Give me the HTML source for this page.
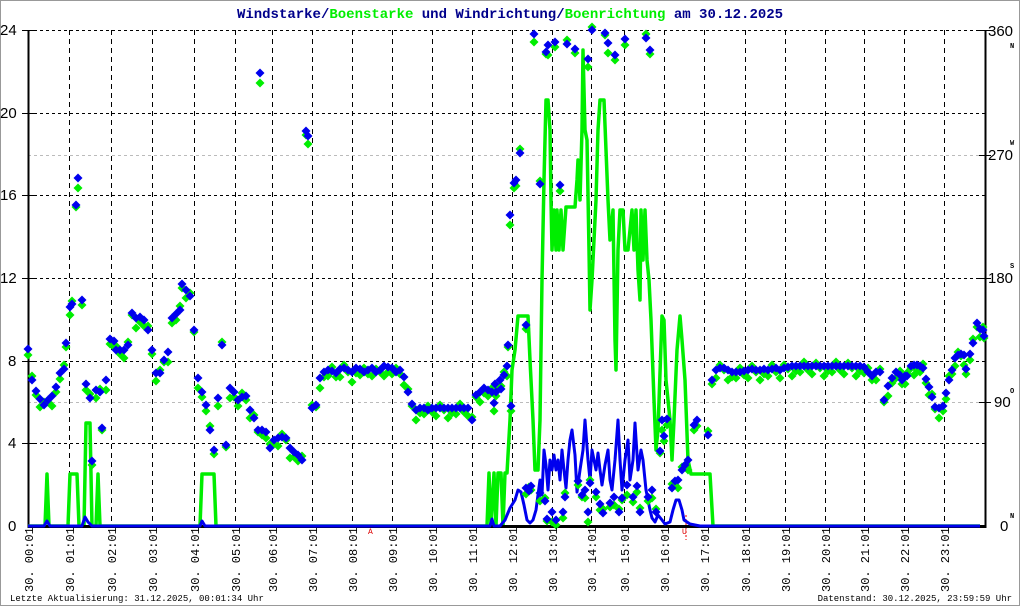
<!DOCTYPE html>
<html><head><meta charset="utf-8"><style>
html,body{margin:0;padding:0;background:#fff}
svg{display:block}
</style></head><body>
<svg id="s" width="1020" height="606" xmlns="http://www.w3.org/2000/svg">
<rect x="0.5" y="0.5" width="1019" height="605" fill="#fff" stroke="#999"/>
<text x="510" y="18" text-anchor="middle" font-family="Liberation Mono, monospace" font-weight="bold" font-size="14"><tspan fill="#00008b">Windstarke/</tspan><tspan fill="#00ee00">Boenstarke</tspan><tspan fill="#00008b"> und Windrichtung/</tspan><tspan fill="#00ee00">Boenrichtung</tspan><tspan fill="#00008b"> am 30.12.2025</tspan></text>
<g id="grid"></g>
<g id="lines"></g>
<g id="pts"></g>
<g font-family="Liberation Sans, sans-serif" font-size="15" fill="#000">
<text x="0" y="35">24</text><text x="0" y="118">20</text><text x="0" y="200">16</text><text x="0" y="283">12</text><text x="8" y="366">8</text><text x="8" y="448">4</text><text x="8" y="531">0</text>
<text x="988" y="36">360</text><text x="988" y="160">270</text><text x="988" y="283">180</text><text x="994" y="407">90</text><text x="1000" y="531">0</text>
</g>
<g font-family="Liberation Mono, monospace" font-weight="bold" font-size="7" fill="#000">
<text x="1010" y="48">N</text><text x="1010" y="145">W</text><text x="1010" y="268">S</text><text x="1010" y="393">O</text><text x="1010" y="518">N</text>
</g>
<text x="368" y="534" font-family="Liberation Mono, monospace" font-size="8" fill="#d00">A</text>
<text x="682" y="534" font-family="Liberation Mono, monospace" font-size="8" fill="#d00">U</text>
<g id="xl" font-family="Liberation Mono, monospace" font-size="12" fill="#000"></g>
<text x="10" y="601" font-family="Liberation Mono, monospace" font-size="9" fill="#000">Letzte Aktualisierung: 31.12.2025, 00:01:34 Uhr</text>
<text x="1012" y="601" text-anchor="end" font-family="Liberation Mono, monospace" font-size="9" fill="#000">Datenstand: 30.12.2025, 23:59:59 Uhr</text>
</svg>
<script>
var NS="http://www.w3.org/2000/svg";
function el(p,t,a,txt){var e=document.createElementNS(NS,t);for(var k in a)e.setAttribute(k,a[k]);if(txt)e.textContent=txt;document.getElementById(p).appendChild(e);return e;}
var R=985;
var gx=[28,69,111,152,194,235,272,312,352,392,432,472,512,552,591,624,664,704,745,785,825,864,904,944];
var hy=[30,113,195,278,361,443];
for(var i=0;i<hy.length;i++)el("grid","line",{x1:28,x2:R,y1:hy[i]+.5,y2:hy[i]+.5,stroke:"#000","stroke-dasharray":"3,3"});
el("grid","line",{x1:28,x2:R,y1:155.5,y2:155.5,stroke:"#bbb","stroke-dasharray":"3,3"});
el("grid","line",{x1:28,x2:R,y1:402.5,y2:402.5,stroke:"#bbb","stroke-dasharray":"3,3"});
for(var i=1;i<gx.length;i++)el("grid","line",{x1:gx[i]+.5,x2:gx[i]+.5,y1:30,y2:526,stroke:"#000","stroke-dasharray":"5,4"});
el("grid","line",{x1:28.5,x2:28.5,y1:30,y2:528,stroke:"#000","stroke-width":2});
el("grid","line",{x1:R+.5,x2:R+.5,y1:30,y2:528,stroke:"#000","stroke-width":2});
for(var i=0;i<hy.length;i++){el("grid","line",{x1:22,x2:34,y1:hy[i]+.5,y2:hy[i]+.5,stroke:"#000"});}
[30,155,278,402].forEach(function(y){el("grid","line",{x1:R-6,x2:R+6,y1:y+.5,y2:y+.5,stroke:"#000"});});
el("grid","line",{x1:686,x2:686,y1:515,y2:540,stroke:"#e00","stroke-dasharray":"2,2"});
for(var i=0;i<gx.length;i++){var h=("0"+i).slice(-2);el("xl","text",{transform:"translate("+(gx[i]+5)+",592) rotate(-90)"},"30. "+h+":01");}
var G="28,526 45,526 47,474 49,526 68,526 70,474 77,474 79,526 84,526 86,423 90,423 92,526 96,526 98,474 100,526 200,526 202,474 214,474 216,526 487,526 489,473 491,526 494,473 496,526 498,473 501,473 503,526 505,473 507,473 510,420 512,370 515,350 518,316 528,316 530,360 533,420 535,470 538,470 540,420 542,280 544,180 546,100 548,100 550,130 551,200 552,250 554,210 556,250 557,210 559,250 561,210 563,250 566,207 570,207 575,207 577,180 578,160 580,200 582,130 583,50 585,130 587,140 589,250 590,310 592,280 594,240 596,200 598,130 600,100 604,100 606,150 608,200 610,240 613,210 615,340 616,370 618,250 620,210 623,210 625,250 628,250 630,230 632,210 634,250 636,210 638,270 640,300 641,210 643,260 645,210 647,260 649,280 651,320 654,400 656,450 658,430 662,316 664,320 666,380 670,420 672,460 674,420 677,350 680,316 682,340 685,380 688,460 691,474 710,474 713,526 980,526";
var B="28,526 44,526 47,521 50,526 82,526 85,517 88,522 92,526 200,526 202,521 205,526 490,526 492,519 494,526 500,526 505,520 510,508 515,500 518,490 521,492 524,505 527,520 530,523 533,520 536,510 540,480 542,495 544,450 546,465 548,490 550,460 552,470 554,455 556,470 558,460 560,480 562,450 564,470 566,488 568,460 570,440 572,430 575,455 577,492 580,470 583,450 585,420 588,460 590,480 592,450 594,460 596,470 598,453 600,470 602,485 605,465 608,450 610,480 612,490 615,460 618,420 620,460 622,490 625,460 628,440 630,480 633,460 635,423 638,470 641,450 643,460 646,490 650,510 652,518 655,522 658,515 662,520 665,524 670,522 673,510 676,500 679,500 682,510 684,520 690,524 700,526 980,526";
el("lines","polyline",{points:G,fill:"none",stroke:"#00ee00","stroke-width":3.5,"stroke-linejoin":"round"});
el("lines","line",{x1:28,x2:R,y1:526.5,y2:526.5,stroke:"#000","stroke-width":3});
el("lines","polyline",{points:B,fill:"none",stroke:"#0000ee","stroke-width":3,"stroke-linejoin":"round"});
var P=[[28,349],[32,380],[36,391],[40,399],[44,405],[48,400],[52,396],[56,387],[60,373],[64,369],[66,343],[70,307],[72,304],[76,205],[78,178],[82,300],[86,384],[90,398],[92,461],[96,390],[100,392],[102,428],[106,380],[110,339],[114,341],[116,350],[120,350],[124,350],[128,345],[132,313],[136,318],[140,317],[144,320],[148,330],[152,350],[156,373],[160,373],[164,360],[168,352],[172,318],[176,314],[180,310],[182,284],[186,290],[190,296],[194,330],[198,378],[202,392],[206,405],[210,430],[214,450],[218,398],[222,345],[226,445],[230,388],[234,392],[238,400],[242,397],[246,396],[250,410],[254,418],[258,430],[260,73],[262,430],[266,432],[270,448],[274,440],[278,438],[282,437],[286,438],[290,448],[294,452],[298,455],[302,460],[306,131],[308,136],[312,408],[316,405],[320,378],[324,372],[328,370],[332,371],[336,373],[340,369],[344,368],[348,370],[352,372],[356,368],[360,369],[364,372],[368,370],[372,368],[376,372],[380,370],[384,366],[388,367],[392,368],[396,372],[400,370],[404,377],[408,392],[412,404],[416,410],[420,408],[424,408],[428,410],[432,408],[436,408],[440,408],[444,408],[448,408],[452,408],[456,408],[460,408],[464,408],[468,408],[472,420],[476,395],[480,392],[484,388],[488,390],[492,392],[496,392],[500,380],[504,375],[508,345],[510,215],[514,183],[516,180],[520,153],[526,325],[534,34],[540,184],[546,52],[548,45],[555,42],[560,185],[567,44],[575,49],[588,59],[592,30],[605,33],[608,43],[615,55],[625,39],[646,38],[650,50],[494,403],[501,389],[495,384],[507,366],[511,406],[526,488],[529,491],[531,486],[540,493],[545,501],[547,519],[552,512],[556,520],[563,512],[565,497],[578,481],[585,490],[590,483],[582,495],[588,512],[596,492],[600,504],[603,513],[610,503],[614,497],[619,512],[622,498],[627,485],[633,497],[637,486],[640,512],[648,497],[652,490],[656,512],[660,451],[662,420],[664,436],[667,419],[672,488],[675,481],[678,480],[682,470],[685,465],[688,460],[694,425],[697,420],[708,435],[712,380],[716,370],[720,368],[724,368],[728,370],[732,372],[736,372],[740,372],[744,371],[748,370],[752,369],[756,370],[760,370],[764,369],[768,370],[772,369],[776,368],[780,370],[784,368],[788,367],[792,366],[796,366],[800,366],[804,366],[808,366],[812,366],[816,366],[820,366],[824,366],[828,366],[832,366],[836,366],[840,366],[844,366],[848,366],[852,366],[856,366],[860,366],[864,367],[868,372],[872,376],[876,372],[880,372],[884,400],[888,386],[892,378],[896,372],[900,375],[902,380],[905,376],[907,376],[911,366],[914,365],[917,365],[920,366],[923,368],[926,379],[929,387],[932,397],[935,407],[939,408],[943,406],[946,393],[949,380],[952,370],[955,358],[958,355],[961,354],[964,355],[966,369],[970,354],[973,343],[977,323],[980,329],[983,330],[984,336]];
function dia(x,y,c){el("pts","polygon",{points:(x)+","+(y-4.5)+" "+(x+4.5)+","+y+" "+x+","+(y+4.5)+" "+(x-4.5)+","+y,fill:c});}
var off=[6,-4,4,8,-3,2,10,5];
P.forEach(function(p,i){if(p[0]<=R)dia(p[0],p[1]+off[i%8],"#00ee00");});
P.forEach(function(p){if(p[0]<=R)dia(p[0],p[1],"#0000ee");});
</script>
</body></html>
